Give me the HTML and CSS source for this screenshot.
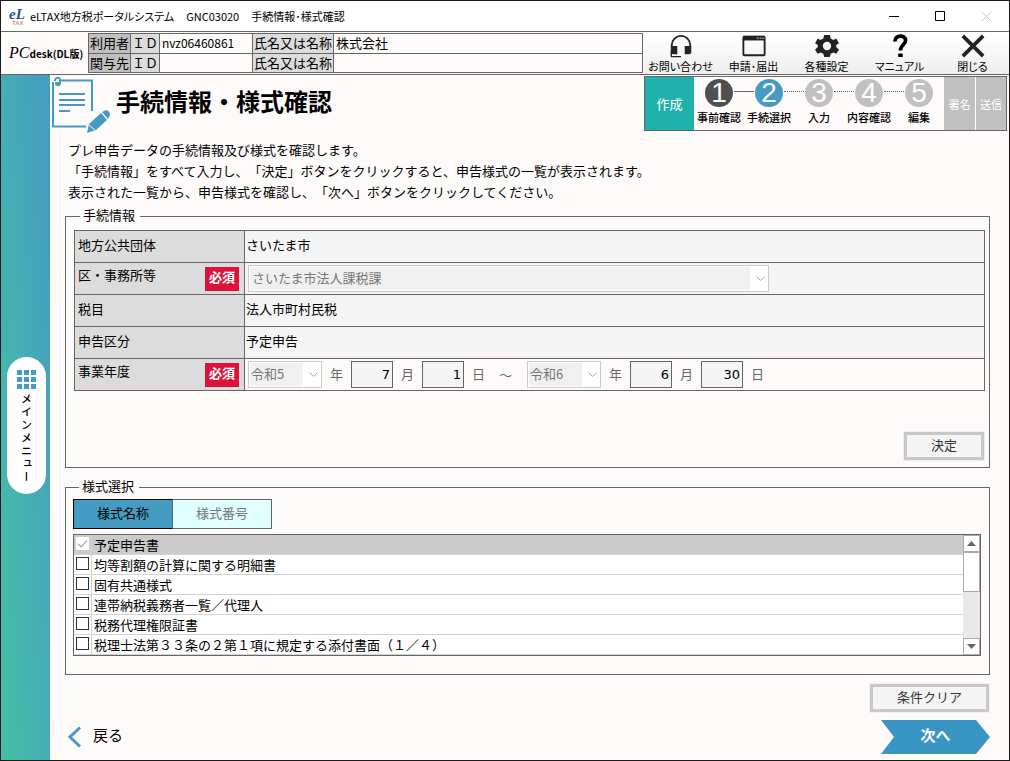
FILE: index.html
```html
<!DOCTYPE html>
<html lang="ja">

    <head>
        <meta charset="UTF-8" />
        <meta name="viewport" content="width=device-width, initial-scale=1.0" />
        <title>eLTAX地方税ポータルシステム</title>
        <link rel="stylesheet" href="styles.css">
    </head>

    <body>
        <div class="window">
            <!-- タイトルバー -->
            <div class="titlebar">
                <svg class="app-icon" width="20" height="20" viewBox="0 0 20 20">
                    <text x="1" y="13" class="icon-el">eL</text>
                    <text x="4" y="19" class="icon-tax">TAX</text>
                </svg>
                <div class="titlebar-text">
                    <span>eLTAX地方税ポータルシステム</span>
                    <span>GNC03020</span>
                    <span>手続情報･様式確認</span>
                </div>
                <div class="window-buttons">
                    <button type="button" aria-label="最小化">
                        <svg width="11" height="11" viewBox="0 0 11 11"><path d="M0 5.5H10" stroke="#000" /></svg>
                    </button>
                    <button type="button" aria-label="最大化">
                        <svg width="11" height="11" viewBox="0 0 11 11"><path d="M.5 .5H9.500V9.500H.5Z" stroke="#000" fill="none" /></svg>
                    </button>
                    <button type="button" aria-label="閉じる" disabled>
                        <svg width="11" height="11" viewBox="0 0 11 11"><path d="M.5 .5L10.500 10.500M10.500 .5L.5 10.500" stroke="#c8c8c8" /></svg>
                    </button>
                </div>
            </div>

            <!-- ヘッダー -->
            <header class="header">
                <div class="logo"><i>PC</i><b>desk(DL版)</b></div>
                <table class="user-table">
                    <tr>
                        <th class="kind">利用者</th>
                        <th class="id">ＩＤ</th>
                        <td class="id-value">nvz06460861</td>
                        <th class="name">氏名又は名称</th>
                        <td>株式会社</td>
                    </tr>
                    <tr>
                        <th class="kind">関与先</th>
                        <th class="id">ＩＤ</th>
                        <td class="id-value"></td>
                        <th class="name">氏名又は名称</th>
                        <td></td>
                    </tr>
                </table>
                <nav class="toolbar">
                    <button type="button">
                        <svg width="26" height="26" viewBox="0 0 26 26">
                            <path d="M3 15V12A10 10 0 0 1 23 12V21" fill="none" stroke="#222" stroke-width="2" />
                            <path d="M2 13H9V22H4L2 20ZM17 13H24V20L22 22H17Z" fill="#222" />
                            <path d="M2.500 18V24.500H13" fill="none" stroke="#222" stroke-width="1.500" />
                        </svg>
                        <span>お問い合わせ</span>
                    </button>
                    <button type="button">
                        <svg width="26" height="26" viewBox="0 0 26 26">
                            <rect x="1.500" y="3" width="23" height="20" rx="1" fill="none" stroke="#222" stroke-width="2" />
                            <path d="M1 2H25V7H1Z" fill="#222" />
                            <path d="M16 4h2v1h-2zM19 4h2v1h-2zM22 4h2v1h-2z" fill="#fff" />
                        </svg>
                        <span>申請･届出</span>
                    </button>
                    <button type="button">
                        <svg width="26" height="26" viewBox="0 0 26 26">
                            <path fill="#222" fill-rule="evenodd" d="M10 1H16L17 5L20 6.500L23 5L26 10L23 12V14L26 17L23 21.500L20 20L17 21.500L16 25H10L9 21.500L6 20L3 21.500L0 17L3 14V12L0 10L3 5L6 6.500L9 5ZM13 8.500A4.500 4.500 0 1 0 13 17.500A4.500 4.500 0 1 0 13 8.500Z" />
                        </svg>
                        <span>各種設定</span>
                    </button>
                    <button type="button">
                        <svg width="26" height="26" viewBox="0 0 26 26">
                            <path d="M7.500 8C7.500 .5 19 .5 19 7C19 12 13.500 11.500 13.500 18" fill="none" stroke="#000" stroke-width="4" />
                            <rect x="11" y="21" width="5" height="4" rx="1" />
                        </svg>
                        <span>マニュアル</span>
                    </button>
                    <button type="button">
                        <svg width="26" height="26" viewBox="0 0 26 26">
                            <path d="M2 2L24 24M24 2L2 24" stroke="#222" stroke-width="4" />
                        </svg>
                        <span>閉じる</span>
                    </button>
                </nav>
            </header>

            <div class="body">
                <!-- サイドバー -->
                <aside class="sidebar">
                    <button type="button" class="main-menu">
                        <svg width="20" height="20" viewBox="0 0 20 20">
                            <path fill="#459bc2" d="M0 0h5v5H0zM7 0h5v5H7zM14 0h5v5h-5zM0 7h5v5H0zM7 7h5v5H7zM14 7h5v5h-5zM0 14h5v5H0zM7 14h5v5H7zM14 14h5v5h-5z" />
                        </svg>
                        <span>メインメニュー</span>
                    </button>
                </aside>

                <main class="main">
                    <div class="page-head">
                        <svg class="doc-icon" width="58" height="57" viewBox="0 0 58 57">
                            <path d="M8 3.500H40V34M34 49.500H1V5" fill="none" stroke="#459bc2" stroke-width="2" />
                            <path d="M3 4C3 0 8 0 8 3V6C8 9 4 9 4 6H7" fill="none" stroke="#459bc2" stroke-width="2" />
                            <path d="M7 17H33M7 23H33M7 28H33M7 34H18" stroke="#459bc2" stroke-width="2" />
                            <path d="M35 56L37 47L49 36L55 43L44 53ZM50 35L54 33Q58 34 58 38L56 42Z" fill="#459bc2" />
                            <path d="M37 48L43 53" stroke="#fffafa" stroke-width="1" />
                        </svg>
                        <h1>手続情報・様式確認</h1>
                        <div class="steps">
                            <div class="phase phase-current">作成</div>
                            <ol>
                                <li class="done"><span>1</span>事前確認</li>
                                <li class="current"><span>2</span>手続選択</li>
                                <li><span>3</span>入力</li>
                                <li><span>4</span>内容確認</li>
                                <li><span>5</span>編集</li>
                            </ol>
                            <div class="phase phase-next">署名</div>
                            <div class="phase phase-next">送信</div>
                        </div>
                    </div>

                    <form class="content">
                        <p class="guide">
                            プレ申告データの手続情報及び様式を確認します。<br>
                            「手続情報」をすべて入力し、「決定」ボタンをクリックすると、申告様式の一覧が表示されます。<br>
                            表示された一覧から、申告様式を確認し、「次へ」ボタンをクリックしてください。
                        </p>

                        <!-- 手続情報 -->
                        <fieldset class="procedure">
                            <legend>手続情報</legend>
                            <table class="info-table">
                                <tr>
                                    <th>地方公共団体</th>
                                    <td>さいたま市</td>
                                </tr>
                                <tr>
                                    <th><div class="th-inner"><label for="office">区・事務所等</label><span class="required">必須</span></div></th>
                                    <td class="controls">
                                        <div class="select select-wide">
                                            <select id="office" disabled>
                                                <option>さいたま市法人課税課</option>
                                            </select>
                                            <svg width="9" height="6" viewBox="0 0 9 6"><path d="M.5 .5L4.500 4.500L8.500 .5" fill="none" stroke="#a8a8a8" /></svg>
                                        </div>
                                    </td>
                                </tr>
                                <tr>
                                    <th>税目</th>
                                    <td>法人市町村民税</td>
                                </tr>
                                <tr>
                                    <th>申告区分</th>
                                    <td>予定申告</td>
                                </tr>
                                <tr>
                                    <th><div class="th-inner"><span>事業年度</span><span class="required">必須</span></div></th>
                                    <td class="controls period-cell">
                                        <div class="period">
                                            <div class="select">
                                                <select id="from-year" disabled>
                                                    <option>令和5</option>
                                                </select>
                                                <svg width="9" height="6" viewBox="0 0 9 6"><path d="M.5 .5L4.500 4.500L8.500 .5" fill="none" stroke="#a8a8a8" /></svg>
                                            </div>
                                            <label for="from-year">年</label>
                                            <input type="text" id="from-month" value="7" readonly>
                                            <label for="from-month">月</label>
                                            <input type="text" id="from-day" value="1" readonly>
                                            <label for="from-day">日</label>
                                            <span class="tilde">～</span>
                                            <div class="select">
                                                <select id="to-year" disabled>
                                                    <option>令和6</option>
                                                </select>
                                                <svg width="9" height="6" viewBox="0 0 9 6"><path d="M.5 .5L4.500 4.500L8.500 .5" fill="none" stroke="#a8a8a8" /></svg>
                                            </div>
                                            <label for="to-year">年</label>
                                            <input type="text" id="to-month" value="6" readonly>
                                            <label for="to-month">月</label>
                                            <input type="text" id="to-day" value="30" readonly>
                                            <label for="to-day">日</label>
                                        </div>
                                    </td>
                                </tr>
                            </table>
                            <button type="button" class="btn btn-decide">決定</button>
                        </fieldset>

                        <!-- 様式選択 -->
                        <fieldset class="forms">
                            <legend>様式選択</legend>
                            <div class="tabs">
                                <button type="button" class="tab active">様式名称</button>
                                <button type="button" class="tab">様式番号</button>
                            </div>
                            <div class="form-list">
                                <ul>
                                    <li class="fixed"><input type="checkbox" id="form1" checked disabled><label for="form1">予定申告書</label></li>
                                    <li><input type="checkbox" id="form2"><label for="form2">均等割額の計算に関する明細書</label></li>
                                    <li><input type="checkbox" id="form3"><label for="form3">固有共通様式</label></li>
                                    <li><input type="checkbox" id="form4"><label for="form4">連帯納税義務者一覧／代理人</label></li>
                                    <li><input type="checkbox" id="form5"><label for="form5">税務代理権限証書</label></li>
                                    <li><input type="checkbox" id="form6"><label for="form6">税理士法第３３条の２第１項に規定する添付書面（１／４）</label></li>
                                </ul>
                                <div class="scrollbar">
                                    <button type="button" aria-label="上へ"><svg width="9" height="5" viewBox="0 0 9 5"><path d="M0 5L4.500 0L9 5Z" fill="#666" /></svg></button>
                                    <div class="thumb"></div>
                                    <button type="button" class="scroll-down" aria-label="下へ"><svg width="9" height="5" viewBox="0 0 9 5"><path d="M0 0L4.500 5L9 0Z" fill="#666" /></svg></button>
                                </div>
                            </div>
                        </fieldset>

                        <button type="button" class="btn btn-clear">条件クリア</button>

                        <div class="footer">
                            <a href="#" class="back">
                                <svg width="13" height="22" viewBox="0 0 13 22"><path d="M12 1.500L2 11L12 20.500" fill="none" stroke="#459bc2" stroke-width="3" /></svg>
                                <span>戻る</span>
                            </a>
                            <button type="button" class="next">次へ</button>
                        </div>
                    </form>
                </main>
            </div>
        </div>
    </body>

</html>
```

FILE: styles.css
```css
* {
    box-sizing: border-box;
}

body {
    margin: 0;
    background: #fffafa;
    color: #000;
    font-family: "Noto Sans CJK JP", sans-serif;
    font-size: 13px;
    line-height: 20px;
    text-spacing-trim: space-all;
}

button,
input,
select {
    margin: 0;
    font-family: inherit;
    font-size: inherit;
    line-height: inherit;
}

.window {
    display: flex;
    flex-direction: column;
    min-height: 100vh;
    border: 1px solid #1a1a1a;
}

/* タイトルバー */
.titlebar {
    display: flex;
    align-items: center;
    height: 30px;
    padding-left: 7px;
    background: #fff;
}

.icon-el {
    font: italic bold 15px "Liberation Serif", serif;
    fill: #1f4e9c;
}

.icon-tax {
    font: bold 6px "Liberation Sans", sans-serif;
    fill: #b89c6c;
}

.titlebar-text {
    display: flex;
    gap: 12px;
    flex: 1;
    margin-left: 2px;
    font-size: 11px;
    font-feature-settings: "palt";
}

.window-buttons {
    display: flex;
}

.window-buttons button {
    display: flex;
    align-items: center;
    justify-content: center;
    width: 46px;
    height: 28px;
    padding: 0;
    border: 0;
    background: none;
}

/* ヘッダー */
.header {
    display: flex;
    align-items: center;
    height: 44px;
    border-top: 1px solid #666;
    border-bottom: 1px solid #666;
}

.logo {
    display: flex;
    align-items: baseline;
    width: 87px;
    padding-left: 8px;
    font-size: 11px;
    white-space: nowrap;
}

.logo i {
    font-family: "Liberation Serif", serif;
    font-size: 16px;
}

.logo b {
    font-family: "Liberation Sans Narrow", "Noto Sans CJK JP", sans-serif;
    font-size: 10px;
}

.user-table {
    flex: 1;
    height: 40px;
    border-collapse: collapse;
    table-layout: fixed;
}

.user-table th,
.user-table td {
    height: 19px;
    padding: 0 2px;
    border: 1px solid #666;
    font-weight: normal;
    line-height: 18px;
    text-align: left;
    white-space: nowrap;
}

.user-table th {
    background: #dcdcdc;
    text-align: center;
}

.user-table .kind {
    width: 42px;
    padding: 0;
    background: #c0c0c0;
}

.user-table .id {
    width: 29px;
    padding: 0;
}

.user-table .id-value {
    width: 93px;
    font-size: 12px;
}

.user-table .name {
    width: 81px;
    padding: 0;
}

.toolbar {
    display: flex;
    height: 100%;
    margin-left: 1px;
    background: linear-gradient(#fff, #efefef);
}

.toolbar button {
    display: flex;
    flex-direction: column;
    align-items: center;
    width: 73px;
    padding: 2px 0 0;
    border: 0;
    background: none;
    font-size: 11px;
    line-height: 16px;
    font-feature-settings: "palt";
    white-space: nowrap;
    color: #000;
}

.body {
    display: flex;
    flex: 1;
}

/* サイドバー */
.sidebar {
    display: flex;
    align-items: center;
    justify-content: center;
    width: 49px;
    padding-left: 2px;
    padding-top: 16px;
    background: linear-gradient(to top right, #45bfa5, #459bc2);
}

.main-menu {
    display: flex;
    flex-direction: column;
    align-items: center;
    width: 39px;
    height: 137px;
    padding: 13px 0 0;
    border: 0;
    border-radius: 20px;
    background: #fff;
    color: #000;
}

.main-menu span {
    margin-top: 3px;
    font-size: 11px;
    font-weight: 500;
    line-height: 12px;
    writing-mode: vertical-rl;
    letter-spacing: 2px;
}

.main {
    flex: 1;
    min-width: 0;
}

.page-head {
    display: flex;
    height: 62px;
    padding: 1px 2px 0 2px;
}

.doc-icon {
    flex: none;
    margin-top: 1px;
}

.page-head h1 {
    flex: 1;
    margin: 0 0 0 6px;
    font-size: 24px;
    line-height: 50px;
    white-space: nowrap;
}

/* ステップ表示 */
.steps {
    display: flex;
    height: 55px;
    border: 1px solid #666;
}

.phase {
    display: flex;
    align-items: center;
    justify-content: center;
    color: #fff;
}

.phase-current {
    width: 49px;
    background: #20b2aa;
}

.phase-next {
    width: 31px;
    background: #c0c0c0;
    font-size: 11px;
}

.phase-next + .phase-next {
    border-left: 1px solid #fff;
}

.steps ol {
    display: flex;
    margin: 0;
    padding: 0;
    list-style: none;
}

.steps li {
    position: relative;
    width: 50px;
    padding-top: 2px;
    font-size: 11px;
    font-weight: 500;
    line-height: 20px;
    text-align: center;
    white-space: nowrap;
}

.steps li span {
    display: block;
    width: 28px;
    height: 28px;
    margin: 0 auto;
    border-radius: 50%;
    background: #c0c0c0;
    color: #fff;
    font-family: "Liberation Sans", Arial, sans-serif;
    font-size: 28px;
    font-weight: normal;
    line-height: 28px;
}

.steps .done span {
    background: #505050;
}

.steps .current span {
    background: #459bc2;
}

/* 丸と丸をつなぐ線 */
.steps li + li::before {
    content: "";
    position: absolute;
    top: 14px;
    left: -10px;
    width: 20px;
    border-top: 1px dotted #666;
}

.steps .done + li::before {
    border-top-style: solid;
}

.content {
    padding: 0 19px 6px 15px;
}

.guide {
    margin: 0 0 4px;
    padding: 2px 3px 0;
    line-height: 21px;
}

fieldset {
    min-width: 0;
    margin: 0;
    border: 1px solid #666;
}

legend {
    margin-left: 6px;
    padding: 0 5px 2px 3px;
    line-height: 18px;
}

/* 手続情報 */
.procedure {
    display: flex;
    flex-direction: column;
    padding: 4px 4px 7px 8px;
}

.info-table {
    width: 100%;
    border-collapse: collapse;
}

.info-table th,
.info-table td {
    height: 32px;
    padding: 0 1px 4px;
    border: 1px solid #666;
    font-weight: normal;
    text-align: left;
}

.info-table th {
    width: 170px;
    padding: 0 3px 4px;
    background: #dcdcdc;
}

.info-table td {
    background: #f5f5f5;
}

.info-table .controls {
    padding: 0 3px;
}

.info-table .period-cell {
    background: #fffafa;
}

.th-inner {
    display: flex;
    justify-content: space-between;
    height: 24px;
    padding-right: 2px;
}

.required {
    width: 34px;
    height: 24px;
    margin-top: 2px;
    background: #dc143c;
    color: #fff;
    font-weight: bold;
    line-height: 20px;
    text-align: center;
}

.select {
    position: relative;
    width: 74px;
    height: 27px;
}

.select-wide {
    width: 521px;
}

.select select {
    width: 100%;
    height: 100%;
    padding: 0 0 2px 2px;
    border: 1px solid #ccc;
    border-radius: 0;
    outline: none;
    appearance: none;
    background: linear-gradient(#f0f0f0, #f0f0f0) 1px 1px / calc(100% - 19px) calc(100% - 2px) no-repeat #fff;
    color: #777;
    opacity: 1;
}

.select-wide select {
    padding-left: 3px;
}

.select svg {
    position: absolute;
    top: 11px;
    right: 4px;
}

.period {
    display: flex;
    align-items: center;
    gap: 8px;
    color: #666;
}

.period label {
    padding-bottom: 2px;
}

.period input {
    width: 42px;
    height: 27px;
    padding: 0 2px;
    border: 1px solid #666;
    background: #f5f5f5;
    font-family: "DejaVu Sans", sans-serif;
    text-align: right;
}

.tilde {
    margin: 0 7px 0 6px;
}

.btn {
    height: 28px;
    padding: 0 0 3px;
    border: 3px solid #c8c8c8;
    outline: 1px solid #f0f0f0;
    background: #f5f5f5;
    color: #333;
}

.btn-decide {
    width: 80px;
    margin: 41px 1px 0 auto;
}

/* 様式選択 */
.forms {
    margin-top: 9px;
    padding: 2px 8px 18px 7px;
}

.tabs {
    display: flex;
}

.tab {
    width: 99px;
    height: 30px;
    padding: 0 0 2px;
    border: 1px solid #666;
    border-left: 0;
    background: #e0ffff;
    color: #777;
}

.tab.active {
    width: 100px;
    border: 1px solid #000;
    border-right-color: #666;
    background: #459bc2;
    color: #000;
}

.form-list {
    display: flex;
    margin-top: 5px;
    border: 1px solid #666;
    background: #fff;
}

.form-list ul {
    flex: 1;
    margin: 0;
    padding: 0;
    list-style: none;
}

.form-list li {
    display: flex;
    height: 20px;
    padding-left: 2px;
    border-bottom: 1px solid #d3d3d3;
}

.form-list li.fixed {
    background: #cbcbcb;
}

.form-list input {
    width: 13px;
    height: 13px;
    margin: 2px 2px 0 0;
    border: 1px solid #333;
    appearance: none;
    background: #fff;
}

.form-list .fixed input {
    position: relative;
    border-color: #fff;
}

.fixed input::after {
    content: "";
    position: absolute;
    top: 0;
    left: 3px;
    width: 4px;
    height: 8px;
    border: solid #999;
    border-width: 0 1px 1px 0;
    transform: rotate(42deg);
}

.form-list label {
    flex: 1;
    padding-left: 2px;
    border-left: 1px solid #d3d3d3;
    line-height: 20px;
}

.scrollbar {
    display: flex;
    flex-direction: column;
    width: 17px;
    background: #e8e8e8;
}

.scrollbar button {
    display: flex;
    align-items: center;
    justify-content: center;
    height: 17px;
    padding: 0;
    border: 1px solid #aaa;
    background: #fff;
}

.scrollbar .thumb {
    height: 40px;
    border: 1px solid #aaa;
    background: #fff;
}

.scrollbar .scroll-down {
    margin-top: auto;
}

.btn-clear {
    display: block;
    width: 119px;
    margin: 9px 1px 0 auto;
}

/* フッター */
.footer {
    display: flex;
    align-items: center;
    justify-content: space-between;
    margin-top: 8px;
}

.back {
    display: flex;
    align-items: center;
    gap: 12px;
    padding-left: 3px;
    color: #000;
    font-size: 15px;
    text-decoration: none;
}

.back span {
    padding-bottom: 5px;
}

.next {
    width: 109px;
    height: 34px;
    padding: 0 0 5px;
    border: 0;
    background: #3996c4;
    clip-path: polygon(0 0, 95px 0, 100% 50%, 95px 100%, 0 100%, 13px 50%);
    color: #fff;
    font-size: 15px;
    font-weight: bold;
}
```
